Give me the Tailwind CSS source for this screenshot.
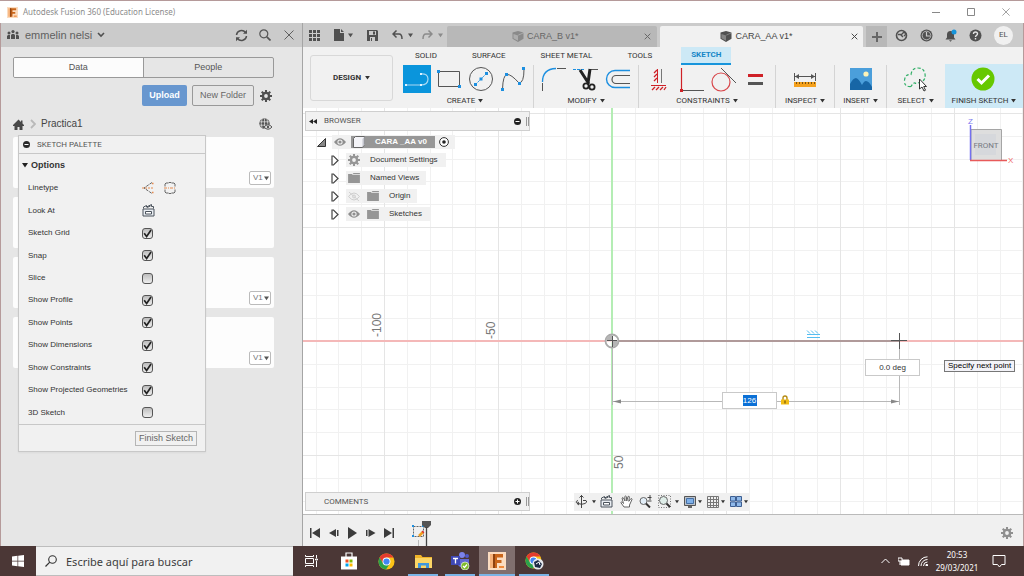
<!DOCTYPE html>
<html lang="es">
  <head>
    <meta charset="UTF-8" />
    <meta name="viewport" content="width=device-width, initial-scale=1.0" />
    <script src="https://cdn.jsdelivr.net/npm/@tailwindcss/browser@4"></script>
    <title>Autodesk Fusion 360 (Education License)</title>
  </head>

  <body class="flex h-screen flex-col overflow-hidden bg-white font-['Liberation_Sans',Arial,sans-serif] text-[8px] leading-none text-[#333]">

    <!-- Shared icon shapes -->
    <svg class="hidden">
      <symbol id="caret" viewBox="0 0 6 5"><path d="M0 0h6L3 4.5z" fill="currentColor" /></symbol>
      <symbol id="eye" viewBox="0 0 12 8">
        <path d="M0 4Q6-3.600 12 4Q6 11.600 0 4z" fill="currentColor" />
        <circle cx="6" cy="4" r="2.600" fill="#f1f1f1" /><circle cx="6" cy="4" r="1.600" fill="currentColor" />
      </symbol>
      <symbol id="folder" viewBox="0 0 13 11"><path d="M0 1h4l1 1h8v9H0zM5 0h8v1H6z" fill="#969696" /></symbol>
      <symbol id="expand" viewBox="0 0 8 11"><path d="M1 1v9h1.500L7 5.500 2.500 1z" fill="#fff" stroke="#444" stroke-width="1.200" /></symbol>
      <symbol id="gear" viewBox="0 0 14 14">
        <circle cx="7" cy="7" r="3.600" fill="none" stroke="currentColor" stroke-width="2.800" />
        <path d="M7 0v3M7 11v3M0 7h3M11 7h3M2 2l2.200 2.200M9.800 9.800L12 12M12 2L9.800 4.200M4.200 9.800L2 12" stroke="currentColor" stroke-width="2.400" />
      </symbol>
      <symbol id="cross" viewBox="0 0 10 10"><path d="M.5.5l9 9M9.500.5l-9 9" stroke="currentColor" fill="none" /></symbol>
      <symbol id="close" viewBox="0 0 10 10"><path d="M1 1l8 8M9 1l-8 8" stroke="currentColor" stroke-width="1.400" fill="none" /></symbol>
      <symbol id="cube" viewBox="0 0 12 12">
        <path d="M0 1.500L6 0l6 1.500v7L6 12 0 8.500z" fill="currentColor" /><path d="M1 3.200l5 1.600v5.700L1 7.800z" fill="#fff" fill-opacity=".3" /><path d="M6.300 4.500L12 2" stroke="#fff" stroke-opacity=".5" stroke-width=".6" />
      </symbol>
      <symbol id="tick" viewBox="0 0 10 10"><path d="M2 4.800L4.200 7.800 8.200 1.800" fill="none" stroke="#222" stroke-width="1.500" /></symbol>
      <symbol id="fusion" viewBox="0 0 18 18">
        <path d="M0 0h18v18H0z" fill="#fbdcc0" /><path d="M2 2h4v14H2z" fill="#f6b27a" /><path d="M5 2h10v3.500H9v2.500h4.500v3H9v5H5z" fill="#c9651a" /><path d="M5 2h2v14H5z" fill="#8d4210" /><path d="M11 14h5v2h-5z" fill="#f08a3c" />
      </symbol>
      <symbol id="lookat" viewBox="0 0 13 13">
        <path d="M1 5h11v7H1z" fill="#e9edf2" stroke="#4b535c" /><path d="M3.500 7.500h6v2.500h-6z" fill="#fff" stroke="#4b535c" /><path d="M1.500 4.500V3l3-1.500v1.500L9.500.5v2h2v2M5 3.500L8.500 2" fill="none" stroke="#4b535c" />
      </symbol>
      <symbol id="chrome" viewBox="0 0 18 18">
        <circle cx="9" cy="9" r="8.500" fill="#fbc116" /><path d="M1.600 4.800A8.500 8.500 0 0 1 16.400 4.800H9L5.300 11z" fill="#e33b2e" /><path d="M1.600 4.800A8.500 8.500 0 0 0 8.500 17.500L12.600 11.100H5.400z" fill="#2ba14b" /><circle cx="9" cy="9" r="4.200" fill="#fff" /><circle cx="9" cy="9" r="3.300" fill="#4285f4" />
      </symbol>
    </svg>

    <!-- Window title bar -->
    <header class="flex h-[23px] shrink-0 items-center border-t border-[#b59a9a] bg-white pl-[7px] font-['Noto_Sans',sans-serif] text-[#8c8c8c]">
      <svg class="h-[11px] w-[11px]"><use href="#fusion" /></svg>
      <h1 class="ml-[5px]">Autodesk Fusion 360 (Education License)</h1>
      <div class="ml-auto flex items-center gap-[26px] pr-[14px]">
        <button type="button" aria-label="Minimize"><svg class="h-[9px] w-[9px]" viewBox="0 0 9 9"><path d="M0 4.500h8" stroke="#888" /></svg></button>
        <button type="button" aria-label="Maximize"><svg class="h-[9px] w-[9px]" viewBox="0 0 9 9"><path d="M.5.5h7v7h-7z" fill="none" stroke="#888" /></svg></button>
        <button type="button" aria-label="Close window"><svg class="h-[8px] w-[8px]"><use href="#cross" /></svg></button>
      </div>
    </header>

    <div class="flex min-h-0 flex-1 border-x border-[#b59a9a]">

      <!-- Data panel -->
      <aside class="relative flex w-[302px] shrink-0 flex-col border-r border-[#a5a5a5] bg-[#e6e6e6]">
        <div class="flex h-6 shrink-0 items-center bg-[#cbcbcb] pl-[6px] pr-[8px] text-[#5f5f5f]">
          <svg class="h-[10px] w-[12px]" viewBox="0 0 12 10" fill="#505050"><circle cx="2" cy="3" r="1.500" /><circle cx="6" cy="1.600" r="1.600" /><circle cx="10" cy="3" r="1.500" /><path d="M0 9V6l1-1h2v4zM4 9V5l1-1h2l1 1v4zM9 9V5h2l1 1v3z" /></svg>
          <span class="ml-[6px] text-[11px]">emmelin nelsi</span>
          <svg class="ml-[5px] h-[6px] w-[8px]" viewBox="0 0 8 6"><path d="M1 1l3 3 3-3" fill="none" stroke="#505050" stroke-width="1.600" /></svg>
          <button type="button" aria-label="Refresh" class="ml-auto"><svg class="h-[13px] w-[13px]" viewBox="0 0 13 13"><path d="M1.500 6a5 5 0 0 1 9-2.500M11.500 7a5 5 0 0 1-9 2.500" fill="none" stroke="#505050" stroke-width="1.500" /><path d="M12 .8v4H8zM1 12.200v-4h4z" fill="#505050" /></svg></button>
          <button type="button" aria-label="Search" class="ml-[11px]"><svg class="h-[12px] w-[12px]" viewBox="0 0 12 12"><circle cx="4.800" cy="4.800" r="4" fill="none" stroke="#555" stroke-width="1.200" /><path d="M7.800 7.800L11.500 11.500" stroke="#555" stroke-width="1.700" /></svg></button>
          <button type="button" aria-label="Close panel" class="ml-[13px]"><svg class="h-[10px] w-[10px]"><use href="#cross" /></svg></button>
        </div>

        <div class="mt-[10px] mr-[28px] ml-[12px] grid h-[21px] shrink-0 grid-cols-2 overflow-hidden rounded-xs border border-[#999] text-[9px] text-[#555]">
          <button type="button" class="border-r border-[#999] bg-[#fcfcfc]">Data</button>
          <button type="button">People</button>
        </div>

        <div class="mt-[7px] mr-[30px] flex shrink-0 items-center justify-end gap-[5px] text-[9px]">
          <button type="button" class="h-[21px] w-[45px] rounded-xs bg-[#6897cf] font-bold text-white">Upload</button>
          <button type="button" class="h-[21px] w-[62px] rounded-xs border border-[#999] text-[#666]">New Folder</button>
          <button type="button" aria-label="Settings" class="ml-[1px] text-[#505050]"><svg class="h-[12px] w-[12px]"><use href="#gear" /></svg></button>
        </div>

        <div class="mt-[12px] mr-[30px] ml-[12px] flex shrink-0 items-center text-[10px] text-[#444]">
          <svg class="h-[11px] w-[11px]" viewBox="0 0 11 11" fill="#484848"><path d="M0 6L5.500.5 8 3V1.500h1.500v3L11 6v1H9.500v4H6.500V8h-2v3h-3V7H0z" /></svg>
          <svg class="ml-[6px] h-[10px] w-[6px]" viewBox="0 0 6 10"><path d="M1 1l4 4-4 4" fill="none" stroke="#b9b9b9" stroke-width="1.800" /></svg>
          <a href="#" class="ml-[5px]">Practica1</a>
          <svg class="ml-auto h-[12px] w-[13px]" viewBox="0 0 13 12"><circle cx="5.500" cy="5.500" r="5.200" fill="#555" /><path d="M.5 3.800h10M.5 7.200h10M5.500.5v10M3 1Q1.500 5.500 3 10M8 1Q9.500 5.500 8 10" fill="none" stroke="#e6e6e6" stroke-width=".7" /><path d="M5 9Q9 4.500 13 9Q9 13.500 5 9z" fill="#e6e6e6" stroke="#555" /><circle cx="9" cy="9" r="1.200" fill="#555" /></svg>
        </div>

        <!-- Design files -->
        <div class="mt-[7px] mr-[28px] ml-[12px] flex flex-col gap-[9px]">
          <article class="flex h-[51px] items-end justify-end rounded-xs bg-[#fdfdfd] p-[3px]">
            <div class="relative text-[#777]">
              <select aria-label="Version" class="block h-[14px] w-[22px] appearance-none rounded-xs border border-[#bbb] bg-white pl-[3px]"><option>V1</option></select>
              <svg class="pointer-events-none absolute top-[5px] right-[2px] h-[5px] w-[5px] text-[#555]"><use href="#caret" /></svg>
            </div>
          </article>
          <article class="h-[51px] rounded-xs bg-[#fdfdfd]"></article>
          <article class="flex h-[51px] items-end justify-end rounded-xs bg-[#fdfdfd] p-[3px]">
            <div class="relative text-[#777]">
              <select aria-label="Version" class="block h-[14px] w-[22px] appearance-none rounded-xs border border-[#bbb] bg-white pl-[3px]"><option>V1</option></select>
              <svg class="pointer-events-none absolute top-[5px] right-[2px] h-[5px] w-[5px] text-[#555]"><use href="#caret" /></svg>
            </div>
          </article>
          <article class="flex h-[51px] items-end justify-end rounded-xs bg-[#fdfdfd] p-[3px]">
            <div class="relative text-[#777]">
              <select aria-label="Version" class="block h-[14px] w-[22px] appearance-none rounded-xs border border-[#bbb] bg-white pl-[3px]"><option>V1</option></select>
              <svg class="pointer-events-none absolute top-[5px] right-[2px] h-[5px] w-[5px] text-[#555]"><use href="#caret" /></svg>
            </div>
          </article>
        </div>

        <!-- Sketch palette, floats over the files -->
        <section class="absolute top-[112px] left-[17px] w-[188px] border border-[#c8c8c8] bg-[#f1f1f1] shadow-xs">
          <div class="flex h-[18px] items-center border-b border-[#c8c8c8] pl-[4px] text-[#555]">
            <svg class="h-[7px] w-[7px]" viewBox="0 0 7 7"><circle cx="3.500" cy="3.500" r="3.500" fill="#2a2a2a" /><path d="M1.500 3.500h4" stroke="#fff" /></svg>
            <h2 class="ml-[7px] font-[Roboto,sans-serif]">SKETCH PALETTE</h2>
          </div>
          <div class="flex h-[23px] items-center pl-[3px]">
            <svg class="h-[5px] w-[6px] text-[#222]"><use href="#caret" /></svg>
            <h3 class="ml-[3px] text-[9px] font-bold">Options</h3>
          </div>
          <div class="grid h-[247px] auto-rows-fr">
            <div class="grid grid-cols-[123px_1fr] items-center pl-[9px] pr-[16px]">
              <span>Linetype</span>
              <div class="-ml-[9px] flex items-center gap-[9px]">
                <button type="button" aria-label="Construction"><svg class="h-[12px] w-[13px]" viewBox="0 0 13 12" fill="none"><path d="M10 .5L2 6l8 5.500" stroke="#666" stroke-dasharray="3 1" /><path d="M0 6h12" stroke="#e58a4e" stroke-dasharray="2 1" /><path d="M10 1.500h1.500M10 10.500h1.500" stroke="#e58a4e" stroke-width="1.500" /></svg></button>
                <button type="button" aria-label="Centerline"><svg class="h-[12px] w-[12px]" viewBox="0 0 12 12" fill="none"><path d="M1 4.500V2l1-1h2.500l.5-.5h2l.5.5H10l1 1v2.500M1 7.500V10l1 1h2.500l.5.5h2l.5-.5H10l1-1V7.500" stroke="#666" /><path d="M0 6h12" stroke="#e58a4e" stroke-dasharray="3 1 1 1" /></svg></button>
              </div>
            </div>
            <div class="grid grid-cols-[123px_1fr] items-center pl-[9px]">
              <span>Look At</span>
              <button type="button" aria-label="Look At" class="-ml-[9px] justify-self-start"><svg class="h-[13px] w-[13px]"><use href="#lookat" /></svg></button>
            </div>
            <div class="grid grid-cols-[114px_1fr] items-center pl-[9px]">
              <label for="grid">Sketch Grid</label>
              <div class="relative"><input id="grid" type="checkbox" checked class="peer block h-[11px] w-[11px] appearance-none rounded-[3px] border border-[#555] bg-linear-to-b from-[#bdbdbd] to-[#eee]" /><svg class="pointer-events-none absolute top-0 left-0 hidden h-[11px] w-[11px] peer-checked:block"><use href="#tick" /></svg></div>
            </div>
            <div class="grid grid-cols-[114px_1fr] items-center pl-[9px]">
              <label for="snap">Snap</label>
              <div class="relative"><input id="snap" type="checkbox" checked class="peer block h-[11px] w-[11px] appearance-none rounded-[3px] border border-[#555] bg-linear-to-b from-[#bdbdbd] to-[#eee]" /><svg class="pointer-events-none absolute top-0 left-0 hidden h-[11px] w-[11px] peer-checked:block"><use href="#tick" /></svg></div>
            </div>
            <div class="grid grid-cols-[114px_1fr] items-center pl-[9px]">
              <label for="slice">Slice</label>
              <div class="relative"><input id="slice" type="checkbox" class="peer block h-[11px] w-[11px] appearance-none rounded-[3px] border border-[#555] bg-linear-to-b from-[#bdbdbd] to-[#eee]" /><svg class="pointer-events-none absolute top-0 left-0 hidden h-[11px] w-[11px] peer-checked:block"><use href="#tick" /></svg></div>
            </div>
            <div class="grid grid-cols-[114px_1fr] items-center pl-[9px]">
              <label for="profile">Show Profile</label>
              <div class="relative"><input id="profile" type="checkbox" checked class="peer block h-[11px] w-[11px] appearance-none rounded-[3px] border border-[#555] bg-linear-to-b from-[#bdbdbd] to-[#eee]" /><svg class="pointer-events-none absolute top-0 left-0 hidden h-[11px] w-[11px] peer-checked:block"><use href="#tick" /></svg></div>
            </div>
            <div class="grid grid-cols-[114px_1fr] items-center pl-[9px]">
              <label for="points">Show Points</label>
              <div class="relative"><input id="points" type="checkbox" checked class="peer block h-[11px] w-[11px] appearance-none rounded-[3px] border border-[#555] bg-linear-to-b from-[#bdbdbd] to-[#eee]" /><svg class="pointer-events-none absolute top-0 left-0 hidden h-[11px] w-[11px] peer-checked:block"><use href="#tick" /></svg></div>
            </div>
            <div class="grid grid-cols-[114px_1fr] items-center pl-[9px]">
              <label for="dimensions">Show Dimensions</label>
              <div class="relative"><input id="dimensions" type="checkbox" checked class="peer block h-[11px] w-[11px] appearance-none rounded-[3px] border border-[#555] bg-linear-to-b from-[#bdbdbd] to-[#eee]" /><svg class="pointer-events-none absolute top-0 left-0 hidden h-[11px] w-[11px] peer-checked:block"><use href="#tick" /></svg></div>
            </div>
            <div class="grid grid-cols-[114px_1fr] items-center pl-[9px]">
              <label for="constraints">Show Constraints</label>
              <div class="relative"><input id="constraints" type="checkbox" checked class="peer block h-[11px] w-[11px] appearance-none rounded-[3px] border border-[#555] bg-linear-to-b from-[#bdbdbd] to-[#eee]" /><svg class="pointer-events-none absolute top-0 left-0 hidden h-[11px] w-[11px] peer-checked:block"><use href="#tick" /></svg></div>
            </div>
            <div class="grid grid-cols-[114px_1fr] items-center pl-[9px]">
              <label for="projected">Show Projected Geometries</label>
              <div class="relative"><input id="projected" type="checkbox" checked class="peer block h-[11px] w-[11px] appearance-none rounded-[3px] border border-[#555] bg-linear-to-b from-[#bdbdbd] to-[#eee]" /><svg class="pointer-events-none absolute top-0 left-0 hidden h-[11px] w-[11px] peer-checked:block"><use href="#tick" /></svg></div>
            </div>
            <div class="grid grid-cols-[114px_1fr] items-center pl-[9px]">
              <label for="sketch3d">3D Sketch</label>
              <div class="relative"><input id="sketch3d" type="checkbox" class="peer block h-[11px] w-[11px] appearance-none rounded-[3px] border border-[#555] bg-linear-to-b from-[#bdbdbd] to-[#eee]" /><svg class="pointer-events-none absolute top-0 left-0 hidden h-[11px] w-[11px] peer-checked:block"><use href="#tick" /></svg></div>
            </div>
          </div>
          <div class="flex h-[27px] items-center justify-end border-t border-[#c8c8c8] pr-[8px]">
            <button type="button" class="h-[15px] w-[62px] border border-[#b5b5b5] text-[9px] text-[#666]">Finish Sketch</button>
          </div>
        </section>
      </aside>

      <!-- Modelling workspace -->
      <main class="flex min-w-0 flex-1 flex-col">

        <!-- Quick access and document tabs -->
        <div class="flex h-6 shrink-0 items-center bg-[#cbcbcb] pl-[6px] text-[#505050]">
          <button type="button" aria-label="Show data panel"><svg class="h-[11px] w-[11px]" viewBox="0 0 11 11" fill="currentColor"><path d="M0 0h3v3H0zM4 0h3v3H4zM8 0h3v3H8zM0 4h3v3H0zM4 4h3v3H4zM8 4h3v3H8zM0 8h3v3H0zM4 8h3v3H4zM8 8h3v3H8z" /></svg></button>
          <button type="button" aria-label="File" class="ml-[14px] flex items-center gap-[4px]"><svg class="h-[12px] w-[10px]" viewBox="0 0 10 12"><path d="M0 0h6v4h4v8H0zM7 0l3 3H7z" fill="currentColor" /></svg><svg class="h-[5px] w-[5px]"><use href="#caret" /></svg></button>
          <button type="button" aria-label="Save" class="ml-[14px]"><svg class="h-[11px] w-[11px]" viewBox="0 0 11 11"><path d="M0 0h10l1 1v10H0z" fill="currentColor" /><path d="M2 1h7v4H2zM3 7h5v4H3z" fill="#cbcbcb" /><path d="M6 1.500h2v3H6zM4 8h1v3H4z" fill="currentColor" /></svg></button>
          <button type="button" aria-label="Undo" class="ml-[14px] flex items-center gap-[5px]"><svg class="h-[10px] w-[11px]" viewBox="0 0 11 10"><path d="M4.500.5L1 4l3.500 3.500M1.500 4H7q3 0 3 5" fill="none" stroke="currentColor" stroke-width="1.500" /></svg><svg class="h-[5px] w-[5px]"><use href="#caret" /></svg></button>
          <button type="button" aria-label="Redo" class="ml-[9px] flex items-center gap-[5px] text-[#8b8b8b]"><svg class="h-[10px] w-[11px]" viewBox="0 0 11 10"><path d="M6.500.5L10 4 6.500 7.500M9.500 4H4Q1 4 1 9" fill="none" stroke="currentColor" stroke-width="1.500" /></svg><svg class="h-[5px] w-[5px]"><use href="#caret" /></svg></button>

          <div class="ml-[4px] flex min-w-0 flex-1 gap-[3px] self-end text-[9px]">
            <div class="flex h-[21px] flex-1 items-center rounded-t-xs bg-[#b8b8b8] pr-[6px] pl-[65px] text-[#666]">
              <svg class="h-[11px] w-[12px] text-[#8a8a8a]"><use href="#cube" /></svg>
              <span class="ml-[3px]">CARA_B v1*</span>
              <button type="button" aria-label="Close CARA_B" class="ml-auto"><svg class="h-[7px] w-[7px]"><use href="#close" /></svg></button>
            </div>
            <div class="flex h-[21px] flex-1 items-center rounded-t-xs bg-[#f1f1f1] pr-[5px] pl-[60px] text-[#444]">
              <svg class="h-[11px] w-[12px] text-[#505050]"><use href="#cube" /></svg>
              <span class="ml-[4px]">CARA_AA v1*</span>
              <button type="button" aria-label="Close CARA_AA" class="ml-auto"><svg class="h-[7px] w-[7px]"><use href="#close" /></svg></button>
            </div>
          </div>
          <button type="button" aria-label="New design" class="ml-[3px] grid h-[21px] w-[21px] place-items-center self-end bg-[#b8b8b8]"><svg class="h-[10px] w-[10px]" viewBox="0 0 10 10"><path d="M5 0v10M0 5h10" stroke="#666" stroke-width="2" /></svg></button>

          <div class="ml-[8px] flex items-center gap-[12px] pr-[10px]">
            <button type="button" aria-label="Extensions"><svg class="h-[13px] w-[13px]" viewBox="0 0 13 13"><circle cx="6.500" cy="6.500" r="5" fill="none" stroke="currentColor" stroke-width="1.600" /><path d="M3 5.500h2.500L8 8M6 6l3-3 2 2-2 2" stroke="currentColor" stroke-width="1.400" fill="none" /></svg></button>
            <button type="button" aria-label="Job status"><svg class="h-[13px] w-[13px]" viewBox="0 0 13 13"><circle cx="6.500" cy="6.500" r="6" fill="currentColor" /><circle cx="6.500" cy="6.500" r="4.300" fill="none" stroke="#cbcbcb" stroke-width=".8" /><path d="M6.500 3v4H10" stroke="#cbcbcb" fill="none" stroke-width="1.200" /></svg></button>
            <button type="button" aria-label="Notifications"><svg class="h-[13px] w-[12px]" viewBox="0 0 12 13"><path d="M.5 10.500l1.500-2V5.500Q2 2 5.500 2T9 5.500v3l1.500 2zM4 11.300h3l-1.500 1.500z" fill="currentColor" /><circle cx="9" cy="3" r="2.500" fill="#1795dc" /></svg></button>
            <button type="button" aria-label="Help"><svg class="h-[13px] w-[13px]" viewBox="0 0 13 13"><circle cx="6.500" cy="6.500" r="6" fill="currentColor" /><path d="M4.500 5q0-2 2-2t2 1.800q0 1-1 1.500t-1 1.700M6.500 9v1.500" fill="none" stroke="#e4e4e4" stroke-width="1.400" /></svg></button>
            <button type="button" class="h-[19px] w-[19px] rounded-full bg-[#f0f0f0] font-[Roboto,sans-serif]">EL</button>
          </div>
        </div>

        <!-- Ribbon -->
        <div class="flex h-[61px] shrink-0 bg-[#f1f1f1] font-[Roboto,sans-serif]">
          <button type="button" class="mt-[8px] ml-[7px] flex h-[46px] w-[83px] shrink-0 items-center justify-center gap-[4px] rounded-[3px] border border-[#d8d8d8] font-bold">
            DESIGN <svg class="h-[4px] w-[5px]"><use href="#caret" /></svg>
          </button>

          <div class="flex min-w-0 flex-1 flex-col pl-[4px]">
            <nav class="flex h-[18px] gap-[35px] pl-[18px]">
              <a href="#" class="flex items-center">SOLID</a>
              <a href="#" class="flex items-center">SURFACE</a>
              <a href="#" class="flex items-center">SHEET METAL</a>
              <a href="#" class="flex items-center">TOOLS</a>
              <a href="#" class="-ml-[6px] flex items-center border-b-2 border-[#1795dc] bg-[#cde9f6] px-[10px] font-bold text-[#1586c6]">SKETCH</a>
            </nav>

            <div class="flex flex-1 text-center">
              <div class="flex w-[136px] flex-col items-center">
                <div class="flex gap-[4px]">
                  <button type="button" aria-label="Line" class="bg-[#0a95dc]"><svg class="h-[28px] w-[28px]" viewBox="0 0 28 28" fill="none"><path d="M3 20h14M18 20q7 0 7-6t-8-5" stroke="#a9d8f2" stroke-width="1.200" /><path d="M2 19h2v2H2zM17 19h2v2h-2zM17 8h2v2h-2z" fill="#dff2ff" /></svg></button>
                  <button type="button" aria-label="Rectangle"><svg class="h-[28px] w-[28px]" viewBox="0 0 28 28"><path d="M3.500 6.500h21v15h-21z" fill="none" stroke="#555" /><path d="M2 5h3v3H2zM23 20h3v3h-3z" fill="#1c8fe0" /></svg></button>
                  <button type="button" aria-label="Circle"><svg class="h-[28px] w-[28px]" viewBox="0 0 28 28"><circle cx="14" cy="14" r="11.500" fill="none" stroke="#555" /><path d="M9 19L19 9" stroke="#1c8fe0" stroke-dasharray="2 1" /><path d="M7 18h3v3H7zM12.500 12.500h3v3h-3zM18 7h3v3h-3z" fill="#1c8fe0" /></svg></button>
                  <button type="button" aria-label="Spline"><svg class="h-[28px] w-[28px]" viewBox="0 0 28 28"><path d="M3.500 24Q4 10 8 9.500T20 18Q25 18 25 4" fill="none" stroke="#555" /><path d="M2 23h3v3H2zM6 8h3v3H6zM19 17h3v3h-3zM23 2h3v3h-3z" fill="#1c8fe0" /></svg></button>
                </div>
                <button type="button" class="mt-[4px] flex items-center gap-[3px]">CREATE <svg class="h-[4px] w-[5px]"><use href="#caret" /></svg></button>
              </div>

              <div class="flex w-[105px] flex-col items-center border-l border-[#d4d4d4]">
                <div class="flex gap-[4px]">
                  <button type="button" aria-label="Fillet"><svg class="h-[28px] w-[28px]" viewBox="0 0 28 28" fill="none"><path d="M2.500 26V18M17 3.500h9" stroke="#555" /><path d="M2.500 17Q2.500 4 16 3.500" stroke="#1c8fe0" stroke-width="1.300" /></svg></button>
                  <button type="button" aria-label="Trim"><svg class="h-[28px] w-[28px]" viewBox="0 0 28 28" fill="none"><path d="M1 4.500h12" stroke="#1c8fe0" stroke-dasharray="3 1" /><path d="M17 4.500h9" stroke="#555" /><path d="M8 5l9 14M18 4l-2 14" stroke="#222" stroke-width="3" /><circle cx="14" cy="21" r="2.600" stroke="#222" stroke-width="1.800" /><circle cx="20" cy="22" r="2.600" stroke="#222" stroke-width="1.800" /></svg></button>
                  <button type="button" aria-label="Offset"><svg class="h-[28px] w-[28px]" viewBox="0 0 28 28" fill="none"><path d="M26 5.500H11a8 8 0 0 0 0 17h15" stroke="#1c8fe0" stroke-width="1.400" /><path d="M26 10.500H12a4 4 0 0 0 0 8h14" stroke="#555" stroke-width="1.200" /></svg></button>
                </div>
                <button type="button" class="mt-[4px] flex items-center gap-[3px]">MODIFY <svg class="h-[4px] w-[5px]"><use href="#caret" /></svg></button>
              </div>

              <div class="flex w-[137px] flex-col items-center border-l border-[#d4d4d4]">
                <div class="flex gap-[4px]">
                  <button type="button" aria-label="Horizontal or vertical"><svg class="h-[28px] w-[28px]" viewBox="0 0 28 28" fill="none"><path d="M12.500 4v14M6 20.500h15" stroke="#cf2127" /><path d="M16.500 4v14" stroke="#777" /><path d="M12 5l-3 3M12 9l-3 3M12 13l-3 3M10 22l-3 3M14 22l-3 3M18 22l-3 3M21 22l-2 3" stroke="#cf2127" stroke-width="1.300" /></svg></button>
                  <button type="button" aria-label="Perpendicular"><svg class="h-[28px] w-[28px]" viewBox="0 0 28 28" fill="none"><path d="M4.500 3v23" stroke="#cf2127" stroke-width="1.200" /><path d="M4 25.500h23" stroke="#555" /><path d="M3 24h3v3H3z" fill="#cf2127" /></svg></button>
                  <button type="button" aria-label="Tangent"><svg class="h-[28px] w-[28px]" viewBox="0 0 28 28" fill="none"><circle cx="12" cy="17" r="9" stroke="#d8474b" stroke-width="1.200" /><path d="M12 3l15 15" stroke="#555" /></svg></button>
                  <button type="button" aria-label="Equal"><svg class="h-[28px] w-[28px]" viewBox="0 0 28 28"><path d="M7 9h15v3H7z" fill="#cf2127" /><path d="M7 17h15v3H7z" fill="#555" /></svg></button>
                </div>
                <button type="button" class="mt-[4px] flex items-center gap-[3px]">CONSTRAINTS <svg class="h-[4px] w-[5px]"><use href="#caret" /></svg></button>
              </div>

              <div class="flex w-[59px] flex-col items-center border-l border-[#d4d4d4]">
                <button type="button" aria-label="Measure"><svg class="h-[28px] w-[28px]" viewBox="0 0 28 28" fill="none"><path d="M3.500 8v8M24.500 8v8M4 11.500h20" stroke="#555" /><path d="M8 9L4 11.500 8 14zM20 9l4 2.500-4 2.500z" fill="#555" /><path d="M3 17h22v5H3z" fill="#f5a11c" /><path d="M5.500 17v2M8.500 17v2M11.500 17v2M14.500 17v2M17.500 17v2M20.500 17v2M23.500 17v2" stroke="#7a5210" /></svg></button>
                <button type="button" class="mt-[4px] flex items-center gap-[3px]">INSPECT <svg class="h-[4px] w-[5px]"><use href="#caret" /></svg></button>
              </div>

              <div class="flex w-[52px] flex-col items-center border-l border-[#d4d4d4]">
                <button type="button" aria-label="Insert image"><svg class="h-[28px] w-[28px]" viewBox="0 0 28 28"><path d="M3 3h22v22H3z" fill="#4b9fdb" /><path d="M3 19q3-6 6-6 3 1 6 7 2-4 4-4 3 0 6 6v3H3z" fill="#1766a6" /><circle cx="19" cy="9" r="2.600" fill="#fcf3b8" /></svg></button>
                <button type="button" class="mt-[4px] flex items-center gap-[3px]">INSERT <svg class="h-[4px] w-[5px]"><use href="#caret" /></svg></button>
              </div>

              <div class="flex w-[58px] flex-col items-center border-l border-[#d4d4d4]">
                <button type="button" aria-label="Select"><svg class="h-[28px] w-[28px]" viewBox="0 0 28 28" fill="none"><path d="M9 21.500Q2 22 2.500 15.500T9 9.500Q10 3 16 3t7 6-4 8-6 1-4 3.500z" stroke="#2fae66" stroke-width="1.200" stroke-dasharray="3 2" /><path d="M17.500 14v10l2.500-2 2 4 1.500-.8-1.800-3.700H24.500z" fill="#fff" stroke="#333" /></svg></button>
                <button type="button" class="mt-[4px] flex items-center gap-[3px]">SELECT <svg class="h-[4px] w-[5px]"><use href="#caret" /></svg></button>
              </div>

              <div class="-mt-px ml-auto flex w-[78px] flex-col items-center bg-[#cde9f6] pt-px">
                <button type="button" aria-label="Finish sketch"><svg class="h-[28px] w-[28px]" viewBox="0 0 28 28"><circle cx="13" cy="14" r="11.500" fill="#66c800" /><path d="M7.500 14l4 4 7.500-7.500" fill="none" stroke="#fff" stroke-width="3" /></svg></button>
                <button type="button" class="mt-[4px] flex items-center gap-[3px]">FINISH SKETCH <svg class="h-[4px] w-[5px]"><use href="#caret" /></svg></button>
              </div>
            </div>
          </div>
        </div>

        <!-- Sketch canvas -->
        <div class="relative flex min-h-0 flex-1 flex-col justify-between overflow-hidden bg-white pl-[2px]">
          <svg class="absolute inset-0 h-full w-full">
            <defs>
              <pattern id="gridlines" x="81" y="5" width="114" height="114" patternUnits="userSpaceOnUse">
                <path d="M23.500 0v114M46.500 0v114M68.500 0v114M91.500 0v114M0 23.500h114M0 46.500h114M0 68.500h114M0 91.500h114" stroke="#f1f1f1" />
                <path d="M.5 0v114M0 .5h114" stroke="#e5e5e5" />
              </pattern>
            </defs>
            <rect width="100%" height="100%" fill="url(#gridlines)" />
            <line x1="309" x2="309" y1="0" y2="100%" stroke="#b4edb4" stroke-width="2" />
            <line x1="0" x2="100%" y1="233" y2="233" stroke="#f4b8b8" stroke-width="2" />
            <g font-size="12" fill="#777">
              <text transform="translate(78 229) rotate(-90)">-100</text>
              <text transform="translate(192 231) rotate(-90)">-50</text>
              <text transform="translate(320 361) rotate(-90)">50</text>
            </g>
            <!-- line being drawn and its dimension -->
            <path d="M309 233h287" stroke="#b09a9a" stroke-width="2" />
            <circle cx="309" cy="233" r="6.500" fill="#fff" fill-opacity=".6" stroke="#aaa" stroke-width="1.800" />
            <path d="M309 233v-6a6 6 0 0 0-6 6zM309 233v6a6 6 0 0 0 6-6z" fill="#b5b5b5" />
            <path d="M304 232.500h10M309.500 228v11M588 232.500h16M596.500 225v16" stroke="#555" />
            <path d="M309.500 240v57M596.500 241v56M309 293.500h287" stroke="#b8b8b8" />
            <path d="M310 293.500l8-2v4zM596 293.500l-8-2v4z" fill="#888" />
            <path d="M504 222.500l3 3M508 222.500l3 3M512 222.500l3 3M504 226.500h13M504 229.500h13" stroke="#55bdf0" fill="none" />
          </svg>

          <div class="absolute top-[284px] left-[419px] flex h-[17px] w-[55px] items-center justify-center border border-[#c9c9c9] bg-white">
            <input aria-label="Length" value="126" class="h-[11px] w-[14px] bg-[#0b70d6] text-center text-white outline-none" />
          </div>
          <svg class="absolute top-[287px] left-[477px] h-[10px] w-[10px]" viewBox="0 0 10 10"><path d="M3 5V3q0-2 2-2t2 2v2" fill="none" stroke="#b58a10" stroke-width="1.400" /><path d="M1 4.500h8V9.500H1z" fill="#f2bd16" /><path d="M4.500 5.500h1v3h-1z" fill="#5a430a" /></svg>
          <input aria-label="Angle" value="0.0 deg" class="absolute top-[251px] left-[562px] h-[17px] w-[55px] border border-[#c9c9c9] bg-white text-center outline-none" />
          <div role="tooltip" class="absolute top-[252px] left-[641px] flex h-[12px] items-center border border-[#777] bg-[#f3f3f8] px-[3px] text-black">Specify next point</div>

          <!-- View cube -->
          <svg class="absolute top-[8px] right-[8px] h-[50px] w-[50px]" viewBox="0 0 50 50" font-size="8">
            <path d="M6 13.500h30.500v31H6z" fill="#dedede" stroke="#a5a5a5" /><path d="M10 18h21v21H10z" fill="#d6d8dc" />
            <path d="M5.500 9v35" stroke="#7470f0" stroke-width="1.500" /><path d="M5 44.500h37" stroke="#e85a5a" stroke-width="1.500" />
            <text x="3" y="8" fill="#7d79ee">Z</text><text x="43" y="47" fill="#ee6b6b">X</text>
            <text x="21" y="32" text-anchor="middle" font-family="Roboto" fill="#777b82">FRONT</text>
          </svg>

          <div class="relative mt-[3px] self-start">
            <div class="flex h-[20px] w-[225px] items-center border border-[#cfcfcf] bg-[#f1f1f1] pl-[3px] font-[Roboto,sans-serif] text-[#555]">
              <svg class="h-[5px] w-[8px]" viewBox="0 0 8 5"><path d="M0 2.500L4 0v5zM4 2.500L8 0v5z" fill="#222" /></svg>
              <h2 class="ml-[7px]">BROWSER</h2>
              <svg class="mr-[5px] ml-auto h-[7px] w-[7px]" viewBox="0 0 7 7"><circle cx="3.500" cy="3.500" r="3.500" fill="#222" /><path d="M1.500 3.500h4" stroke="#fff" /></svg>
              <span class="h-[9px] w-[3px] border-x border-[#999]"></span>
            </div>
            <ul class="mt-[2px]">
              <li class="flex h-[18px] items-center pl-[12px]">
                <svg class="h-[9px] w-[9px]" viewBox="0 0 9 9"><path d="M.5 8.500h8v-8z" fill="#888" stroke="#333" /></svg>
                <div class="ml-[6px] flex h-[14px] items-center bg-[#f1f1f1] pr-[6px] pl-[2px] text-[#8f8f8f]">
                  <svg class="h-[8px] w-[12px]"><use href="#eye" /></svg>
                  <div class="ml-[5px] flex h-[12px] items-center bg-[#979797] pr-[8px] pl-[2px] font-bold text-white">
                    <svg class="h-[12px] w-[12px]" viewBox="0 0 12 12"><path d="M.5 2.500l2-2h9v8l-2 3h-9z" fill="#f4f4f8" stroke="#666" /><path d="M9.500 3l2-2.500v8l-2 2.500z" fill="#c3c5cd" /></svg>
                    <span class="ml-[10px]">CARA _AA v0</span>
                  </div>
                  <svg class="ml-[4px] h-[10px] w-[10px]" viewBox="0 0 10 10"><circle cx="5" cy="5" r="4.400" fill="#fff" stroke="#333" /><circle cx="5" cy="5" r="1.800" fill="#222" /></svg>
                </div>
              </li>
              <li class="flex h-[18px] items-center pl-[26px]">
                <svg class="h-[11px] w-[8px]"><use href="#expand" /></svg>
                <div class="ml-[7px] flex h-[14px] items-center bg-[#f1f1f1] pr-[8px] pl-[2px] text-[#969696]"><svg class="h-[12px] w-[12px]"><use href="#gear" /></svg><span class="ml-[10px] text-[#333]">Document Settings</span></div>
              </li>
              <li class="flex h-[18px] items-center pl-[26px]">
                <svg class="h-[11px] w-[8px]"><use href="#expand" /></svg>
                <div class="ml-[7px] flex h-[14px] items-center bg-[#f1f1f1] pr-[7px] pl-[2px]"><svg class="h-[10px] w-[12px]"><use href="#folder" /></svg><span class="ml-[10px] text-[#333]">Named Views</span></div>
              </li>
              <li class="flex h-[18px] items-center pl-[26px]">
                <svg class="h-[11px] w-[8px]"><use href="#expand" /></svg>
                <div class="ml-[7px] flex h-[14px] items-center bg-[#f1f1f1] pr-[7px] pl-[2px]"><svg class="h-[9px] w-[12px]" viewBox="0 0 12 9" fill="none" stroke="#cfcfcf"><path d="M.5 4.500Q6-2.500 11.500 4.500Q6 11.500.5 4.500zM1 0l10 9" /><circle cx="6" cy="4.500" r="1.500" /></svg><svg class="ml-[7px] h-[10px] w-[12px]"><use href="#folder" /></svg><span class="ml-[10px] text-[#333]">Origin</span></div>
              </li>
              <li class="flex h-[18px] items-center pl-[26px]">
                <svg class="h-[11px] w-[8px]"><use href="#expand" /></svg>
                <div class="ml-[7px] flex h-[14px] items-center bg-[#f1f1f1] pr-[8px] pl-[2px] text-[#8f8f8f]"><svg class="h-[8px] w-[12px]"><use href="#eye" /></svg><svg class="ml-[7px] h-[10px] w-[12px]"><use href="#folder" /></svg><span class="ml-[10px] text-[#333]">Sketches</span></div>
              </li>
            </ul>
          </div>

          <div class="relative mb-[3px] flex items-center">
            <div class="flex h-[19px] w-[225px] items-center border border-[#cfcfcf] bg-[#f1f1f1] pl-[18px] font-[Roboto,sans-serif] text-[#555]">
              <h2>COMMENTS</h2>
              <svg class="mr-[5px] ml-auto h-[7px] w-[7px]" viewBox="0 0 7 7"><circle cx="3.500" cy="3.500" r="3.500" fill="#222" /><path d="M1.500 3.500h4M3.500 1.500v4" stroke="#fff" /></svg>
              <span class="h-[9px] w-[3px] border-x border-[#999]"></span>
            </div>

            <!-- Navigation bar -->
            <div class="ml-[44px] flex h-[18px] items-center bg-[#f0f0f0] px-[1px] text-[#333]">
              <button type="button" aria-label="Orbit" class="flex items-center gap-[4px]"><svg class="h-[13px] w-[13px]" viewBox="0 0 13 13" fill="none" stroke="#444"><path d="M6.500 0v13M4.500 2.500l2-2 2 2M3 5.500Q-1 7 3 8.500t7 0 1-3H8M4 7l-2 1.500L4 10" /></svg><svg class="h-[4px] w-[4px]"><use href="#caret" /></svg></button>
              <button type="button" aria-label="Look at" class="ml-[4px]"><svg class="h-[13px] w-[13px]"><use href="#lookat" /></svg></button>
              <button type="button" aria-label="Pan" class="ml-[7px]"><svg class="h-[13px] w-[13px]" viewBox="0 0 13 13"><path d="M4 12L.8 7.500q.7-1 1.700 0L3.500 8.500 2 3q1-1 1.500 0L5 6 4.800 1.500q1-1 1.500 0L6.800 6 8 1.500q1-.7 1.400.3L8.800 6.300 11 3.500q1 0 1 1L9.500 10v2z" fill="#fff" stroke="#555" stroke-width=".9" /></svg></button>
              <button type="button" aria-label="Zoom" class="ml-[6px]"><svg class="h-[13px] w-[13px]" viewBox="0 0 13 13" fill="none"><circle cx="4.500" cy="6" r="3.500" fill="#e2eef8" stroke="#666" /><path d="M7 8.500l4 4" stroke="#333" stroke-width="2" /><path d="M11 0v5M8.500 2.500h4M8.500 6h4" stroke="#444" /></svg></button>
              <button type="button" aria-label="Fit" class="ml-[6px] flex items-center gap-[4px]"><svg class="h-[13px] w-[13px]" viewBox="0 0 13 13" fill="none"><path d="M.5.5h12v12H.5z" stroke="#777" stroke-dasharray="1 1.500" /><circle cx="5.500" cy="5.500" r="4" fill="#dfeee9" stroke="#666" /><path d="M8.500 8.500l3.500 3.500" stroke="#333" stroke-width="2" /></svg><svg class="h-[4px] w-[4px]"><use href="#caret" /></svg></button>
              <button type="button" aria-label="Display settings" class="ml-[5px] flex items-center gap-[2px]"><svg class="h-[12px] w-[12px]" viewBox="0 0 12 12"><path d="M.5.5h11v9H.5z" fill="#bcc3cc" stroke="#555" /><path d="M2.500 2.500h7v5h-7z" fill="#7fb0e8" stroke="#4670a5" /><path d="M4 10h4v2H4z" fill="#666" /></svg><svg class="h-[4px] w-[4px]"><use href="#caret" /></svg></button>
              <button type="button" aria-label="Grid and snaps" class="ml-[5px] flex items-center gap-[2px]"><svg class="h-[12px] w-[12px]" viewBox="0 0 12 12" fill="none"><path d="M.5.5h11v11H.5zM3.500 0v12M6.500 0v12M9.500 0v12M0 3.500h12M0 6.500h12M0 9.500h12" stroke="#777" /></svg><svg class="h-[4px] w-[4px]"><use href="#caret" /></svg></button>
              <button type="button" aria-label="Viewports" class="ml-[5px] flex items-center gap-[2px]"><svg class="h-[11px] w-[12px]" viewBox="0 0 12 11"><path d="M.5.5h5v4.500h-5zM6.500.5h5v4.500h-5zM.5 6h5v4.500h-5zM6.500 6h5v4.500h-5z" fill="#8fb9ea" stroke="#3d5f92" /></svg><svg class="h-[4px] w-[4px]"><use href="#caret" /></svg></button>
            </div>
          </div>
        </div>

        <!-- Timeline -->
        <div class="flex h-[32px] shrink-0 items-center border-t border-[#bababa] bg-[#f0f0f0] pt-[4px] pl-[7px] text-[#3c3c3c]">
          <div class="flex items-center gap-[8px]">
            <button type="button" aria-label="Go to start"><svg class="h-[10px] w-[11px]" viewBox="0 0 11 10" fill="currentColor"><path d="M0 0h1.500v10H0zM10 0v10L2 5z" /></svg></button>
            <button type="button" aria-label="Step back"><svg class="h-[10px] w-[11px]" viewBox="0 0 11 10" fill="currentColor"><path d="M7 1v8L0 5zM8 2h1.500v6H8z" /></svg></button>
            <button type="button" aria-label="Play"><svg class="h-[12px] w-[9px]" viewBox="0 0 9 12" fill="currentColor"><path d="M0 0v12l9-6z" /></svg></button>
            <button type="button" aria-label="Step forward"><svg class="h-[10px] w-[11px]" viewBox="0 0 11 10" fill="currentColor"><path d="M3.500 1v8L10.500 5zM1 2h1.500v6H1z" /></svg></button>
            <button type="button" aria-label="Go to end"><svg class="h-[10px] w-[11px]" viewBox="0 0 11 10" fill="currentColor"><path d="M8.500 0H10v10H8.500zM0 0v10l8-5z" /></svg></button>
          </div>
          <svg class="ml-[16px] h-[26px] w-[22px] self-end" viewBox="0 0 22 26" fill="none">
            <path d="M2.500 6.500h10v10h-10z" stroke="#666" stroke-dasharray="2 1" /><path d="M1 5h2v2H1zM11 5h2v2h-2zM1 15h2v2H1z" fill="#1c8fe0" /><path d="M8 16l4-4" stroke="#f0a020" stroke-width="2.500" /><path d="M11.500 12.500l1-1" stroke="#e03030" stroke-width="2.500" /><path d="M7.500 20v6" stroke="#bbb" /><path d="M11 1h9v4l-3 3h-3l-3-3z" fill="#555" /><path d="M15.500 7v19" stroke="#444" stroke-width="1.300" />
          </svg>
          <button type="button" aria-label="Timeline settings" class="mr-[10px] ml-auto text-[#8f8f8f]"><svg class="h-[12px] w-[12px]"><use href="#gear" /></svg></button>
        </div>
      </main>
    </div>

    <!-- Windows taskbar -->
    <footer class="flex h-[30px] shrink-0 bg-[#4b3736] font-['Noto_Sans',sans-serif] text-white">
      <button type="button" aria-label="Start" class="grid w-[36px] place-items-center"><svg class="h-[12px] w-[12px]" viewBox="0 0 12 12" fill="#fff"><path d="M0 1.500L5.500.8v4.900H0zM6.200.7L12 0v5.700H6.200zM0 6.400h5.500v4.900L0 10.500zM6.200 6.400H12V12l-5.800-.7z" /></svg></button>
      <label for="search" class="flex w-[257px] items-center gap-[9px] border-y border-[#bdbdbd] bg-[#f1f1f1] pl-[9px]">
        <svg class="h-[12px] w-[12px] shrink-0" viewBox="0 0 12 12" fill="none"><circle cx="7.500" cy="4.500" r="3.800" stroke="#333" stroke-width="1.100" /><path d="M4.800 7.200L.5 11.500" stroke="#333" stroke-width="1.200" /></svg>
        <input id="search" type="text" placeholder="Escribe aquí para buscar" class="min-w-0 flex-1 text-[11px] outline-none placeholder:text-[#3c3c3c]" />
      </label>
      <nav class="flex">
        <button type="button" aria-label="Task view" class="grid w-[37px] place-items-center"><svg class="h-[12px] w-[13px]" viewBox="0 0 13 12" fill="none" stroke="#fff"><path d="M.5 3.500h8v5h-8zM.5 0v1.500h8V0M.5 12v-1.500h8V12M11.500 0v3M11.500 6v6" /><path d="M10.500 4h2v1h-2z" /></svg></button>
        <button type="button" aria-label="Store" class="grid w-[38px] place-items-center"><svg class="h-[18px] w-[18px]" viewBox="0 0 18 18"><path d="M6 5V1h6v4" fill="none" stroke="#fff" stroke-width="1.200" /><path d="M1 4.500h16V17.500H1z" fill="#fff" /><path d="M5.500 7.500h3v3h-3z" fill="#f25022" /><path d="M9.500 7.500h3v3h-3z" fill="#7fba00" /><path d="M5.500 11.500h3v3h-3z" fill="#00a4ef" /><path d="M9.500 11.500h3v3h-3z" fill="#ffb900" /></svg></button>
        <button type="button" aria-label="Chrome" class="grid w-[37px] place-items-center"><svg class="h-[17px] w-[17px]"><use href="#chrome" /></svg></button>
        <button type="button" aria-label="File explorer" class="mx-[3px] grid w-[30px] place-items-center border-b-2 border-[#7ab4e6] pt-[2px]"><svg class="h-[15px] w-[17px]" viewBox="0 0 17 15"><path d="M0 1h6l1.500 2H17v11H0z" fill="#f0b429" /><path d="M0 4h17v10H0z" fill="#fbd565" /><path d="M3 14V9h11v5h-3v-2.500H6V14z" fill="#3f97dd" /></svg></button>
        <button type="button" aria-label="Teams" class="mx-[4px] grid w-[30px] place-items-center border-b-2 border-[#7ab4e6] pt-[2px]"><svg class="h-[18px] w-[20px]" viewBox="0 0 20 18"><circle cx="12" cy="3" r="3" fill="#7b83eb" /><circle cx="17" cy="4" r="2" fill="#5059c9" /><path d="M7 7h12v5q-1 4-5 4t-6-3z" fill="#6169d2" /><path d="M1 4h9v9H1z" fill="#3f48b5" /><path d="M3 6.500h5M5.500 6.500v5" stroke="#fff" stroke-width="1.300" /><circle cx="15" cy="14" r="4" fill="#7fbb2c" stroke="#fff" stroke-width=".6" /><path d="M13 14l1.500 1.500L17 12.500" fill="none" stroke="#fff" stroke-width="1.200" /></svg></button>
        <button type="button" aria-label="Fusion 360" class="grid w-[36px] place-items-center border-b-2 border-[#7ab4e6] bg-[#806f6e] pt-[2px]"><svg class="h-[18px] w-[18px]"><use href="#fusion" /></svg></button>
        <button type="button" aria-label="Chrome profile" class="mx-[4px] grid w-[30px] place-items-center border-b-2 border-[#7ab4e6] pt-[2px]"><svg class="h-[18px] w-[20px]" viewBox="0 0 20 18"><use href="#chrome" width="17" height="17" x="1" /><circle cx="14" cy="12" r="5.500" fill="#e6e8ec" /><path d="M10 10l4-2 4 4-2 4-5-1z" fill="#1d2b45" /><path d="M12 12l3-2 1 3" stroke="#fff" fill="none" /></svg></button>
      </nav>
      <div class="ml-auto flex items-center pr-[18px]">
        <button type="button" aria-label="Show hidden icons"><svg class="h-[6px] w-[9px]" viewBox="0 0 9 6"><path d="M.5 5l4-4 4 4" fill="none" stroke="#fff" /></svg></button>
        <svg class="ml-[8px] h-[9px] w-[12px]" viewBox="0 0 12 9"><path d="M3 3h8v5H3z" fill="#fff" stroke="#fff" /><path d="M0 1h4v3H0zM2 4v4" fill="#4b3736" stroke="#fff" /></svg>
        <svg class="ml-[8px] h-[10px] w-[10px]" viewBox="0 0 10 10" fill="none" stroke="#fff"><path d="M.5 10A9 9 0 0 1 9.500.8M3 10a6.500 6.500 0 0 1 6.500-6.500M5.500 10a4 4 0 0 1 4-4" /><path d="M8 8.500h1.500V10H8z" fill="#fff" /></svg>
        <div class="ml-[7px] flex w-[44px] flex-col items-center gap-[5px]"><time>20:53</time><time>29/03/2021</time></div>
        <button type="button" aria-label="Notifications" class="ml-[13px]"><svg class="h-[13px] w-[14px]" viewBox="0 0 14 13"><path d="M1 .5h12v9H9.500L7.500 12 5.500 9.500H1z" fill="none" stroke="#fff" /></svg></button>
      </div>
    </footer>
  </body>
</html>
